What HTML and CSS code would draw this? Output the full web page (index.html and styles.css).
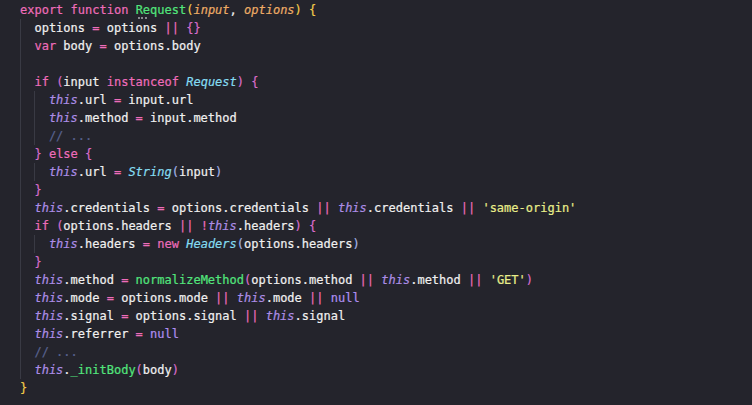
FILE: index.html
```html
<!DOCTYPE html>
<html>
<head>
<meta charset="utf-8">
<link rel="stylesheet" href="styles.css">
</head>
<body>
<div class="code">
  <div class="ln"><span class="k">export</span> <span class="k">function</span> <span class="f hint">Request</span><span class="b1">(</span><span class="p">input</span>, <span class="p">options</span><span class="b1">)</span> <span class="b1">{</span></div>
  <div class="blk">
    <div class="ln">options <span class="k">=</span> options <span class="k">||</span> <span class="b2">{}</span></div>
    <div class="ln"><span class="k">var</span> body <span class="k">=</span> options.body</div>
    <div class="ln"> </div>
    <div class="ln"><span class="k">if</span> <span class="b2">(</span>input <span class="k">instanceof</span> <span class="c">Request</span><span class="b2">)</span> <span class="b2">{</span></div>
    <div class="blk">
      <div class="ln"><span class="t">this</span>.url <span class="k">=</span> input.url</div>
      <div class="ln"><span class="t">this</span>.method <span class="k">=</span> input.method</div>
      <div class="ln"><span class="cm">// ...</span></div>
    </div>
    <div class="ln"><span class="b2">}</span> <span class="k">else</span> <span class="b2">{</span></div>
    <div class="blk">
      <div class="ln"><span class="t">this</span>.url <span class="k">=</span> <span class="c">String</span><span class="b3">(</span>input<span class="b3">)</span></div>
    </div>
    <div class="ln"><span class="b2">}</span></div>
    <div class="ln"><span class="t">this</span>.credentials <span class="k">=</span> options.credentials <span class="k">||</span> <span class="t">this</span>.credentials <span class="k">||</span> <span class="s">'same-origin'</span></div>
    <div class="ln"><span class="k">if</span> <span class="b2">(</span>options.headers <span class="k">||</span> <span class="k">!</span><span class="t">this</span>.headers<span class="b2">)</span> <span class="b2">{</span></div>
    <div class="blk">
      <div class="ln"><span class="t">this</span>.headers <span class="k">=</span> <span class="k">new</span> <span class="c">Headers</span><span class="b3">(</span>options.headers<span class="b3">)</span></div>
    </div>
    <div class="ln"><span class="b2">}</span></div>
    <div class="ln"><span class="t">this</span>.method <span class="k">=</span> <span class="f">normalizeMethod</span><span class="b2">(</span>options.method <span class="k">||</span> <span class="t">this</span>.method <span class="k">||</span> <span class="s">'GET'</span><span class="b2">)</span></div>
    <div class="ln"><span class="t">this</span>.mode <span class="k">=</span> options.mode <span class="k">||</span> <span class="t">this</span>.mode <span class="k">||</span> <span class="n">null</span></div>
    <div class="ln"><span class="t">this</span>.signal <span class="k">=</span> options.signal <span class="k">||</span> <span class="t">this</span>.signal</div>
    <div class="ln"><span class="t">this</span>.referrer <span class="k">=</span> <span class="n">null</span></div>
    <div class="ln"><span class="cm">// ...</span></div>
    <div class="ln"><span class="t">this</span>.<span class="f">_initBody</span><span class="b2">(</span>body<span class="b2">)</span></div>
  </div>
  <div class="ln"><span class="b1">}</span></div>
</div>
</body>
</html>
```

FILE: styles.css
```css
html, body {
  margin: 0;
  padding: 0;
  background: #24242c;
  height: 100%;
}

.code {
  font-family: "DejaVu Sans Mono", "Liberation Mono", monospace;
  font-size: 12px;
  line-height: 18px;
  color: #f0f0f0;
  padding: 1px 0 0 20px;
  -webkit-text-stroke: 0.2px currentColor;
}

.ln {
  height: 18px;
  white-space: pre;
}

.blk {
  border-left: 1px solid #393a44;
  padding-left: calc(2ch - 1px);
}

.k { color: #ee6cba; }
.f { color: #52e47c; }
.p { color: #eeac66; font-style: italic; }
.t { color: #ac8de6; font-style: italic; }
.c { color: #84dcf2; font-style: italic; }
.s { color: #e9ee8a; }
.n { color: #ae8ef0; }
.cm { color: #58628f; }
.b1 { color: #f2cc4a; }
.b2 { color: #d96ccb; }
.b3 { color: #a3b3e6; }

.hint {
  position: relative;
}

.hint::after {
  content: "";
  position: absolute;
  left: 2px;
  top: 14px;
  width: 9px;
  border-bottom: 2px dotted #8a8a90;
}
```
